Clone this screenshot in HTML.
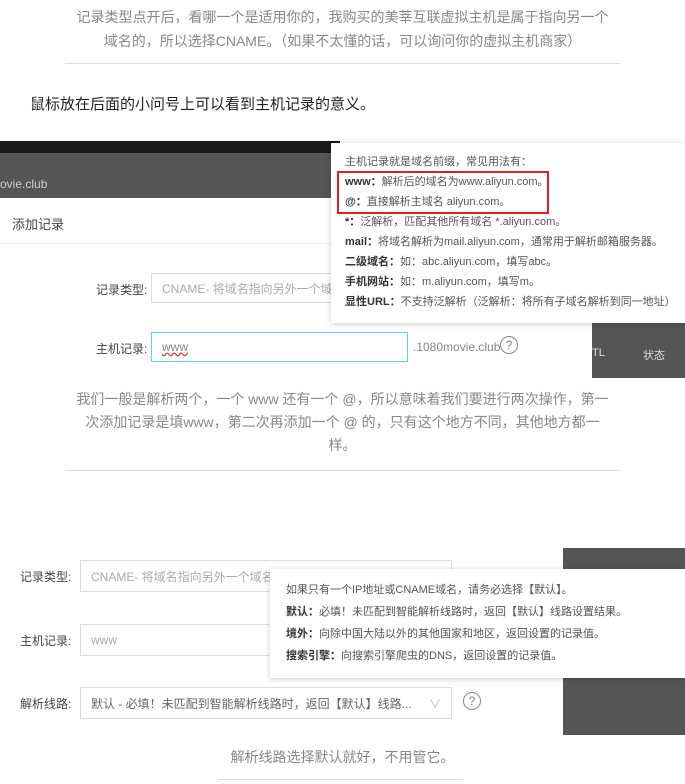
<!DOCTYPE html>
<html><head><meta charset="utf-8"><style>
*{margin:0;padding:0;box-sizing:border-box}
body{width:685px;height:784px;background:#fff;position:relative;overflow:hidden;font-family:"Liberation Sans","Noto Sans CJK SC",sans-serif;color:#666}
.a{position:absolute}
.p{font-size:14px;color:#888;text-align:center;line-height:24px;white-space:nowrap}
.hr{height:1px;background:#ddd}
.tt{font-size:11px;color:#555;line-height:20px;white-space:nowrap}
.tt b{color:#333}
.inp{border:1px solid #ddd;background:#fff;font-size:12px;color:#aaa;padding-left:10px;display:flex;align-items:center;white-space:nowrap;overflow:hidden}
.lab{font-size:12px;color:#444}
.q{width:18px;height:18px;border:1.3px solid #888;border-radius:50%;font-size:12px;color:#888;text-align:center;line-height:16px}
</style></head><body>
<div class="a p" style="left:40px;top:5px;width:605px">记录类型点开后，看哪一个是适用你的，我购买的美莘互联虚拟主机是属于指向另一个<br>域名的，所以选择CNAME。（如果不太懂的话，可以询问你的虚拟主机商家）</div>
<div class="a hr" style="left:65px;top:63px;width:555px"></div>
<div class="a" style="left:30px;top:93px;font-size:15px;color:#222">鼠标放在后面的小问号上可以看到主机记录的意义。</div>

<div class="a" style="left:0;top:141px;width:340px;height:12px;background:#1a1a1a"></div>
<div class="a" style="left:0;top:153px;width:340px;height:45px;background:#555"></div>
<div class="a" style="left:0;top:177px;font-size:12px;color:#ccc">ovie.club</div>
<div class="a" style="left:12px;top:214px;font-size:13px;color:#444">添加记录</div>
<div class="a hr" style="left:0;top:243px;width:340px;background:#eee"></div>
<div class="a lab" style="left:96px;top:281px">记录类型:</div>
<div class="a inp" style="left:151px;top:273px;width:200px;height:30px">CNAME- 将域名指向另外一个域名</div>
<div class="a lab" style="left:96px;top:340px">主机记录:</div>
<div class="a inp" style="left:151px;top:332px;width:257px;height:30px;border-color:#5cd3e0;color:#888"><span style="text-decoration:underline wavy #d33">www</span></div>
<div class="a" style="left:413px;top:340px;font-size:12px;color:#888">.1080movie.club</div>
<div class="a q" style="left:500px;top:336px">?</div>
<div class="a" style="left:592px;top:323px;width:93px;height:55px;background:#555"></div>
<div class="a" style="left:592px;top:347px;font-size:11px;color:#ddd">TL</div>
<div class="a" style="left:643px;top:347px;font-size:11px;color:#ddd">状态</div>

<div class="a tt" style="left:331px;top:143px;width:354px;height:180px;background:#fff;box-shadow:0 1px 6px rgba(0,0,0,.2);padding:9px 0 0 14px;overflow:hidden">
主机记录就是域名前缀，常见用法有：<br><b>www：</b>解析后的域名为www.aliyun.com。<br><b>@：</b>直接解析主域名 aliyun.com。<br><b>*：</b>泛解析，匹配其他所有域名 *.aliyun.com。<br><b>mail：</b>将域名解析为mail.aliyun.com，通常用于解析邮箱服务器。<br><b>二级域名：</b>如：abc.aliyun.com，填写abc。<br><b>手机网站：</b>如：m.aliyun.com，填写m。<br><b>显性URL：</b>不支持泛解析（泛解析：将所有子域名解析到同一地址）</div>
<div class="a" style="left:337px;top:171px;width:212px;height:43px;border:2px solid #e02020"></div>

<div class="a p" style="left:40px;top:388px;width:605px;line-height:23px">我们一般是解析两个，一个 www 还有一个 @，所以意味着我们要进行两次操作，第一<br>次添加记录是填www，第二次再添加一个 @ 的，只有这个地方不同，其他地方都一<br>样。</div>
<div class="a hr" style="left:65px;top:470px;width:555px"></div>

<div class="a" style="left:563px;top:548px;width:122px;height:187px;background:#555"></div>
<div class="a lab" style="left:20px;top:568px">记录类型:</div>
<div class="a inp" style="left:80px;top:560px;width:372px;height:32px">CNAME- 将域名指向另外一个域名</div>
<div class="a lab" style="left:20px;top:632px">主机记录:</div>
<div class="a inp" style="left:80px;top:624px;width:200px;height:32px">www</div>
<div class="a lab" style="left:20px;top:695px">解析线路:</div>
<div class="a inp" style="left:80px;top:687px;width:372px;height:32px;color:#666">默认 - 必填！未匹配到智能解析线路时，返回【默认】线路...<span style="position:absolute;right:10px;color:#bbb">∨</span></div>
<div class="a q" style="left:463px;top:692px">?</div>
<div class="a tt" style="left:270px;top:569px;width:415px;height:109px;background:#fff;box-shadow:0 1px 6px rgba(0,0,0,.2);padding:10px 0 0 16px;line-height:22px">
如果只有一个IP地址或CNAME域名，请务必选择【默认】。<br><b>默认：</b>必填！未匹配到智能解析线路时，返回【默认】线路设置结果。<br><b>境外：</b>向除中国大陆以外的其他国家和地区，返回设置的记录值。<br><b>搜索引擎：</b>向搜索引擎爬虫的DNS，返回设置的记录值。</div>
<div class="a p" style="left:65px;top:745px;width:555px">解析线路选择默认就好，不用管它。</div>
<div class="a hr" style="left:218px;top:779px;width:245px"></div>
</body></html>
